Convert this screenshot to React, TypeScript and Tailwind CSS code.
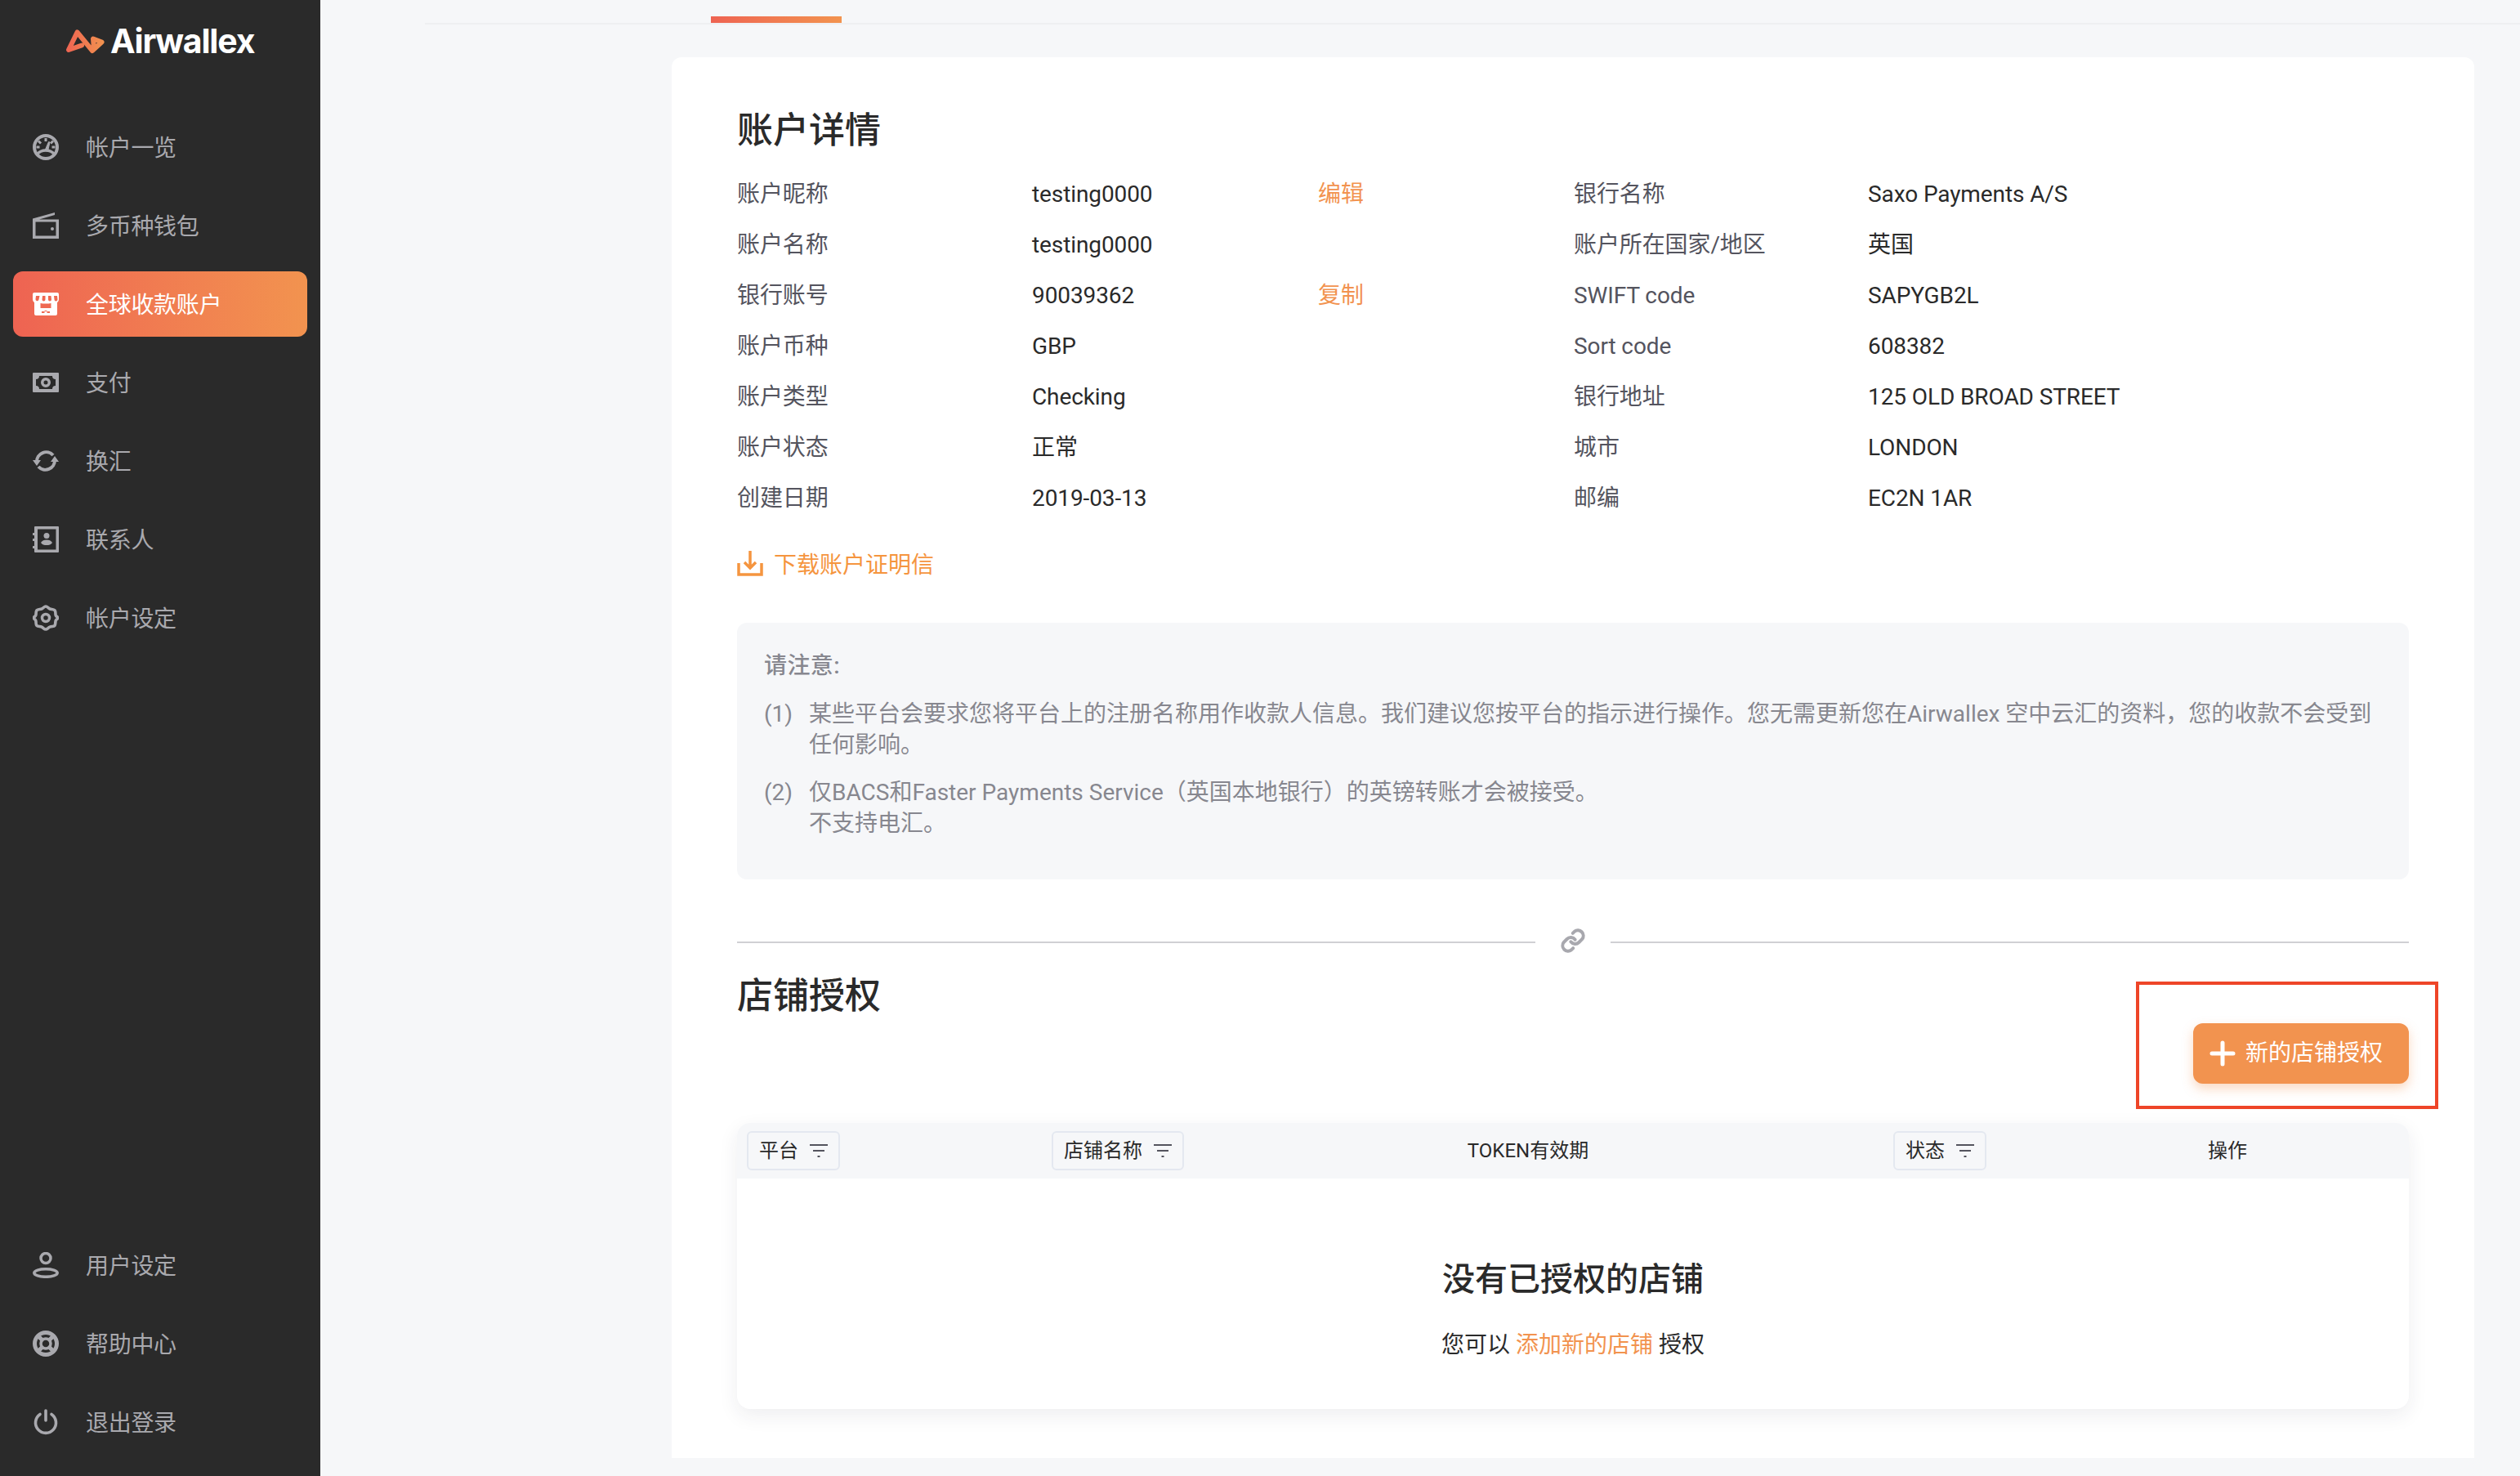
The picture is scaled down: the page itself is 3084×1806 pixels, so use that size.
import React from 'react';

const Gauge = () => (
  <svg viewBox="0 0 32 32" className="h-8 w-8 text-[#a9a9ae]" fill="none" stroke="currentColor">
    <circle cx="16" cy="16" r="14" strokeWidth="4" />
    <path d="M16 5v4M7 8.500l3 3M25 8.500l-3 3M4.500 16h4M27.500 16h-4" strokeWidth="3" />
    <path d="M5 25c3-3.500 7-5 11-5s8 1.500 11 5" strokeWidth="3.500" />
    <path d="M14.800 20.500 19.500 9.500l1.500.5-2.500 11z" fill="currentColor" strokeWidth="1" />
  </svg>
);

const Wallet = () => (
  <svg viewBox="0 0 32 32" className="h-8 w-8 text-[#a9a9ae]" fill="currentColor">
    <path d="M0 7.500 27 0v3L8 8.500h24V32H0zM3.500 11.500v17h25v-17z" fillRule="evenodd" />
    <circle cx="24" cy="20" r="2" />
  </svg>
);

const Store = () => (
  <svg viewBox="0 0 32 28" className="h-[28px] w-8 text-white" fill="currentColor">
    <path
      fillRule="evenodd"
      d="M2 0h28a2 2 0 0 1 2 2v6c0 2-1 3.500-2 4v14a2 2 0 0 1-2 2H4a2 2 0 0 1-2-2V12c-1-.5-2-2-2-4V2a2 2 0 0 1 2-2zM4 4 3.500 8a2 2 0 0 0 4 .5L8.500 4zM12 4l-.5 4.500a2 2 0 0 0 4 0V4zM19 4v4.500a2 2 0 0 0 4 0L22.500 4zM26 4l.5 4.500a2 2 0 0 0 4 0L30 4zM9.500 13v6h13v-6l-3 .5h-7zM11 23v2h3.500v-3h3v3H21v-2z"
    />
  </svg>
);

const Money = () => (
  <svg viewBox="0 0 32 24" className="h-6 w-8 text-[#a9a9ae]" fill="currentColor">
    <path
      fillRule="evenodd"
      d="M1 0h30a1 1 0 0 1 1 1v22a1 1 0 0 1-1 1H1a1 1 0 0 1-1-1V1a1 1 0 0 1 1-1zM8 4a4 4 0 0 1-4 4v8a4 4 0 0 1 4 4h16a4 4 0 0 1 4-4V8a4 4 0 0 1-4-4zM16 6a6 6 0 1 1 0 12a6 6 0 0 1 0-12zM16 9.500a2.500 2.500 0 1 0 0 5a2.500 2.500 0 0 0 0-5z"
    />
  </svg>
);

const Exchange = () => (
  <svg viewBox="0 0 32 28" className="h-7 w-8 text-[#a9a9ae]" fill="none" stroke="currentColor" strokeWidth="4">
    <path d="M5 15A11.500 11.500 0 0 1 25 7" />
    <path d="M27 13A11.500 11.500 0 0 1 7 21" />
    <path d="M0 13h10l-5 7zM32 15H22l5-7z" fill="currentColor" stroke="none" />
  </svg>
);

const Contacts = () => (
  <svg viewBox="0 0 32 32" className="h-8 w-8 text-[#a9a9ae]" fill="currentColor">
    <path
      fillRule="evenodd"
      d="M3 0h28a1 1 0 0 1 1 1v30a1 1 0 0 1-1 1H3a1 1 0 0 1-1-1v-4H1a1.500 1.500 0 0 1 0-3h1v-6H1a1.500 1.500 0 0 1 0-3h1V11H1a1.500 1.500 0 0 1 0-3h1V1a1 1 0 0 1 1-1zM6 3.500v25h22.500v-25z"
    />
    <circle cx="17" cy="11.500" r="3.500" />
    <path d="M10 20c1.500-2.500 4-3.500 7-3.500s5.500 1 7 3.500c-1.500 2.500-4 3-7 3s-5.500-.5-7-3z" />
  </svg>
);

const Gear = () => (
  <svg viewBox="0 0 32 32" className="h-8 w-8 text-[#a9a9ae]" fill="none" stroke="currentColor">
    <path
      strokeWidth="3.600"
      d="M16 2c2 0 3.200 2.200 5 3s4.500.2 6 1.800.5 4 1.200 6 2.300 1.200 2.300 3.200-1.700 1.600-2.300 3.400-.2 4.600-1.200 6-3.500.800-6 1.800-3 2.800-5 2.800-3-1.800-5-2.800-4.500-.300-6-1.800-.6-4-1.200-6-2.300-1.400-2.300-3.400 1.700-1.200 2.300-3.200-.2-4.400 1.200-6 4-1 6-1.800S14 2 16 2z"
    />
    <circle cx="16" cy="16" r="4.500" strokeWidth="3.500" />
  </svg>
);

const UserIcon = () => (
  <svg viewBox="0 0 32 32" className="h-8 w-8 text-[#a9a9ae]" fill="none" stroke="currentColor" strokeWidth="3.500">
    <circle cx="16" cy="7.500" r="6" />
    <ellipse cx="16" cy="25.500" rx="14.200" ry="4.800" />
  </svg>
);

const Lifebuoy = () => (
  <svg viewBox="0 0 32 32" className="h-8 w-8 text-[#a9a9ae]" fill="none" stroke="currentColor">
    <circle cx="16" cy="16" r="13.500" strokeWidth="5" />
    <circle cx="16" cy="16" r="6" strokeWidth="3.500" />
    <path d="M6 6l6 6M26 6l-6 6M6 26l6-6M26 26l-6-6" strokeWidth="5" />
  </svg>
);

const Power = () => (
  <svg viewBox="0 0 32 32" className="h-8 w-8 text-[#a9a9ae]" fill="none" stroke="currentColor" strokeWidth="3.600" strokeLinecap="round">
    <path d="M16 2v12" />
    <path d="M9 6.500a12.500 12.500 0 1 0 14 0" />
  </svg>
);

const Logo = () => (
  <svg viewBox="0 0 48 32" className="h-8 w-12">
    <defs>
      <linearGradient id="logoGrad" gradientUnits="userSpaceOnUse" x1="0" x2="48" y1="0" y2="0">
        <stop offset="0" stopColor="#ee6352" />
        <stop offset="1" stopColor="#f2934f" />
      </linearGradient>
    </defs>
    <path
      fill="none"
      stroke="url(#logoGrad)"
      strokeWidth="6"
      strokeLinejoin="round"
      strokeLinecap="round"
      d="M20 21.500 4 27 14.500 5.500 33 28 44.500 17.500 34 13.500 35 26"
    />
  </svg>
);

const Plus = () => (
  <svg viewBox="0 0 32 32" className="h-8 w-8 text-white" fill="none" stroke="currentColor" strokeWidth="5" strokeLinecap="round">
    <path d="M16 3v26M3 16h26" />
  </svg>
);

const Filter = () => (
  <svg viewBox="0 0 22 18" className="h-[18px] w-[22px] text-[#54545e]" fill="currentColor">
    <path d="M0 1h22v2H0zM4 8h14v2H4zM9.500 15h3v2h-3z" />
  </svg>
);

const navTop = [
  { label: '帐户一览', icon: <Gauge /> },
  { label: '多币种钱包', icon: <Wallet /> },
  { label: '全球收款账户', icon: <Store />, active: true },
  { label: '支付', icon: <Money /> },
  { label: '换汇', icon: <Exchange /> },
  { label: '联系人', icon: <Contacts /> },
  { label: '帐户设定', icon: <Gear /> },
];

const navBottom = [
  { label: '用户设定', icon: <UserIcon /> },
  { label: '帮助中心', icon: <Lifebuoy /> },
  { label: '退出登录', icon: <Power /> },
];

const details = [
  ['账户昵称', 'testing0000', '编辑', '银行名称', 'Saxo Payments A/S'],
  ['账户名称', 'testing0000', '', '账户所在国家/地区', '英国'],
  ['银行账号', '90039362', '复制', 'SWIFT code', 'SAPYGB2L'],
  ['账户币种', 'GBP', '', 'Sort code', '608382'],
  ['账户类型', 'Checking', '', '银行地址', '125 OLD BROAD STREET'],
  ['账户状态', '正常', '', '城市', 'LONDON'],
  ['创建日期', '2019-03-13', '', '邮编', 'EC2N 1AR'],
];

function NavItem({ label, icon, active }: { label: string; icon: React.ReactNode; active?: boolean }) {
  return (
    <div
      className={`mx-4 flex h-20 items-center gap-[33px] rounded-xl pl-6 text-[28px] tracking-[-0.3px] ${
        active ? 'bg-gradient-to-r from-[#ee6352] to-[#f2934f] text-white' : 'text-[#a9a9ae]'
      }`}
    >
      <span className="flex w-8 items-center justify-center">{icon}</span>
      <span className="pt-1">{label}</span>
    </div>
  );
}

function FilterPill({ label }: { label: string }) {
  return (
    <div className="inline-flex h-12 items-center gap-[14px] rounded-md border-2 border-[#e4e8f0] px-[13px]">
      <span>{label}</span>
      <Filter />
    </div>
  );
}

export default function App() {
  return (
    <div className="flex h-[1806px] w-[3084px] overflow-hidden bg-[#f6f7f9] font-['Roboto','Noto_Sans_CJK_SC',sans-serif] text-[#2a2a2a]">
      {/* Sidebar */}
      <aside className="flex w-[392px] shrink-0 flex-col justify-between bg-[#2a2a2a] pb-[26px]">
        <div>
          <div className="flex h-[140px] items-start gap-[7px] pl-20 pt-[34px]">
            <Logo />
            <span className="font-['Inter',sans-serif] text-[41px] leading-8 font-bold tracking-[-1.2px] text-white">Airwallex</span>
          </div>
          <nav className="flex flex-col gap-4">
            {navTop.map((item) => (
              <NavItem key={item.label} {...item} />
            ))}
          </nav>
        </div>
        <nav className="flex flex-col gap-4">
          {navBottom.map((item) => (
            <NavItem key={item.label} {...item} />
          ))}
        </nav>
      </aside>

      {/* Main */}
      <main className="flex-1">
        <div className="ml-[128px] h-[30px] border-b-2 border-[#eff0f2] pt-5">
          <div className="ml-[350px] h-2 w-[160px] bg-gradient-to-r from-[#ee6352] to-[#f2934f]" />
        </div>

        <section className="relative mt-10 ml-[430px] h-[1714px] w-[2206px] rounded-t-xl bg-white px-20 pt-[63px]">
          <h2 className="mb-5 text-[44px] leading-[54px] font-medium">账户详情</h2>

          <div className="grid auto-rows-[62px] grid-cols-[361px_350px_313px_360px_1fr] items-center text-[28px] tracking-[-0.1px]">
            {details.map((row) => (
              <React.Fragment key={row[0]}>
                <div className="text-[#54545e]">{row[0]}</div>
                <div>{row[1]}</div>
                <div className="text-[#f2934f]">{row[2]}</div>
                <div className="text-[#54545e]">{row[3]}</div>
                <div>{row[4]}</div>
              </React.Fragment>
            ))}
          </div>

          <div className="mt-[31px] flex h-10 items-center gap-[13px] text-[28px] text-[#f5953f]">
            <svg viewBox="0 0 32 32" className="mb-1 h-8 w-8" fill="none" stroke="currentColor" strokeWidth="3.500">
              <path d="M2 15v14h28V15" />
              <path d="M16 0v21M9 14l7 7 7-7" />
            </svg>
            <span>下载账户证明信</span>
          </div>

          <div className="mt-[50px] rounded-xl bg-[#f6f7f9] pt-[34px] pr-[33px] pb-[49px] pl-[33px] text-[28px] leading-[38px] text-[#87878f]">
            <div className="font-medium tracking-[0.4px]">请注意:</div>
            <div className="mt-[21px] flex">
              <span className="w-[55px] shrink-0">(1)</span>
              <span>某些平台会要求您将平台上的注册名称用作收款人信息。我们建议您按平台的指示进行操作。您无需更新您在Airwallex 空中云汇的资料，您的收款不会受到任何影响。</span>
            </div>
            <div className="mt-[20px] flex">
              <span className="w-[55px] shrink-0">(2)</span>
              <span>
                仅BACS和Faster Payments Service（英国本地银行）的英镑转账才会被接受。
                <br />
                不支持电汇。
              </span>
            </div>
          </div>

          <div className="mt-[59px] flex h-9 items-center gap-[30px]">
            <div className="h-0.5 flex-1 bg-[#d0d0d4]" />
            <svg viewBox="0 0 24 24" className="mb-1 h-8 w-8 text-[#a8a8ae]" fill="none" stroke="currentColor" strokeWidth="3" strokeLinecap="round">
              <path d="M10 13a5 5 0 0 0 7.500.5l3-3a5 5 0 0 0-7-7l-1.700 1.700" />
              <path d="M14 11a5 5 0 0 0-7.500-.5l-3 3a5 5 0 0 0 7 7l1.700-1.700" />
            </svg>
            <div className="h-0.5 flex-1 bg-[#d0d0d4]" />
          </div>

          <h2 className="mt-[21px] text-[44px] leading-[54px] font-medium">店铺授权</h2>

          <div className="mt-[6px] flex justify-end">
            <button className="flex h-[74px] w-[264px] items-center gap-[12px] rounded-xl bg-[#f2934f] pl-[20px] text-[28px] text-white shadow-[0_6px_14px_rgba(242,147,79,0.35)]">
              <Plus />
              <span>新的店铺授权</span>
            </button>
          </div>

          {/* Table */}
          <div className="mt-12 h-[350px] rounded-2xl bg-white shadow-[0_8px_24px_rgba(40,40,60,0.08)]">
            <div className="grid h-[68px] grid-cols-[373px_190px_810px_229px_444px] items-center rounded-t-2xl bg-[#f6f7f9] text-[24px]">
              <div className="pl-3">
                <FilterPill label="平台" />
              </div>
              <div className="pl-3 whitespace-nowrap">
                <FilterPill label="店铺名称" />
              </div>
              <div className="text-center">TOKEN有效期</div>
              <div className="pl-[42px]">
                <FilterPill label="状态" />
              </div>
              <div className="text-center">操作</div>
            </div>
            <div className="pt-[100px] text-center">
              <div className="text-[40px] leading-[48px] font-medium">没有已授权的店铺</div>
              <div className="mt-9 text-[28px] leading-10">
                您可以 <span className="text-[#f2934f]">添加新的店铺</span> 授权
              </div>
            </div>
          </div>

          {/* red annotation around the button */}
          <div className="absolute top-[1131px] left-[1792px] h-[156px] w-[370px] border-4 border-[#ee4528]" />
        </section>
      </main>
    </div>
  );
}
